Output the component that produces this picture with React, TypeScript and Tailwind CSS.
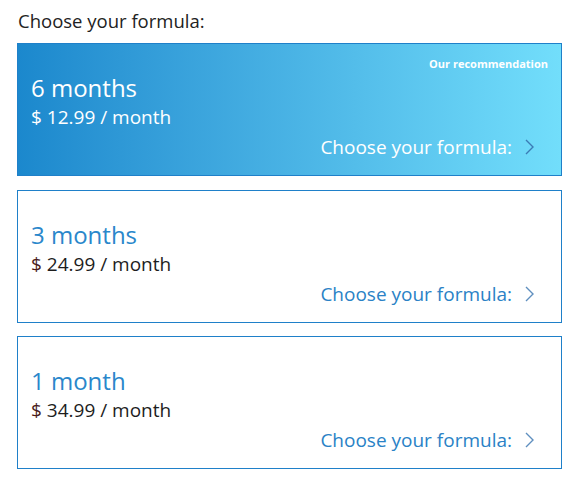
const plans = [
    { id: 6, title: '6 months', price: '12.99', featured: true },
    { id: 3, title: '3 months', price: '24.99', featured: false },
    { id: 1, title: '1 month', price: '34.99', featured: false },
];

function Chevron({ className }: { className: string }) {
    return (
        <svg width="11" height="18" viewBox="0 0 11 18" fill="none" className={className}>
            <path d="M2 2l7 7-7 7" stroke="currentColor" strokeWidth="1.4" strokeLinejoin="miter" />
        </svg>
    );
}

export default function App() {
    return (
        <div className="w-[580px] h-[484px] bg-white font-['Open_Sans',sans-serif] px-[17px] pt-[8px]">
            <h1 className="text-[18.5px] leading-[25px] text-[#222] pl-px">Choose your formula:</h1>

            <div className="mt-[10px] flex flex-col gap-[13.5px] w-[545px]">
                {plans.map((plan) => (
                    <div
                        key={plan.id}
                        className={`relative h-[133px] border border-[#1f80c9] pl-[13px] pr-[26px] pt-[30px] flex flex-col ${
                            plan.featured ? 'bg-gradient-to-r from-[#1b88cd] to-[#72defb] text-white' : 'bg-white'
                        }`}
                    >
                        {plan.featured && (
                            <span className="absolute top-[12px] right-[13px] text-[11px] font-bold text-white">
                                Our recommendation
                            </span>
                        )}
                        <div className={`text-[24px] leading-[28px] ${plan.featured ? 'text-white' : 'text-[#2a87cb]'}`}>
                            {plan.title}
                        </div>
                        <div className={`text-[19px] leading-[24px] mt-[3px] ${plan.featured ? 'text-white' : 'text-[#1d1d1d]'}`}>
                            <span className={plan.featured ? '' : 'text-[#4a1c1c]'}>$</span> {plan.price} / month
                        </div>
                        <div
                            className={`mt-[6px] self-end flex items-center gap-[12px] text-[19px] leading-[24px] ${
                                plan.featured ? 'text-white' : 'text-[#2a82c6]'
                            }`}
                        >
                            <span>Choose your formula:</span>
                            <Chevron className={plan.featured ? 'text-[#3b7bb5]' : 'text-[#5f8fbf]'} />
                        </div>
                    </div>
                ))}
            </div>
        </div>
    );
}
